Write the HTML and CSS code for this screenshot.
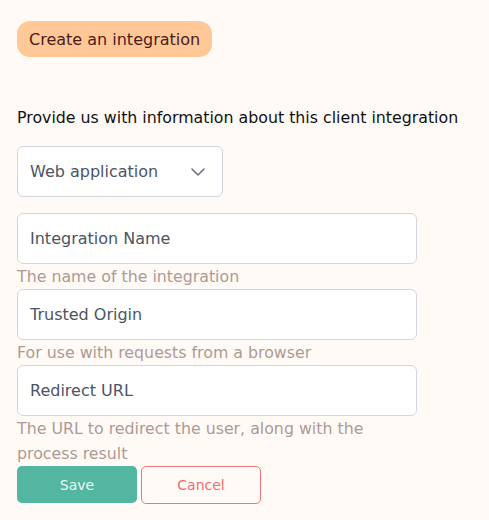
FILE: index.html
```html
<!DOCTYPE html>
<html>
<head>
<meta charset="utf-8">
<link rel="stylesheet" href="styles.css">
</head>
<body>
<div class="page">
  <div class="pill">Create an integration</div>
  <p class="intro">Provide us with information about this client integration</p>
  <div class="select">
    <span>Web application</span>
    <svg class="chev" width="14" height="8" viewBox="0 0 14 8"><path d="M1 1l6 6 6-6" fill="none" stroke="#6b7280" stroke-width="1.6" stroke-linecap="round" stroke-linejoin="round"/></svg>
  </div>
  <div class="field">
    <div class="input">Integration Name</div>
    <div class="help">The name of the integration</div>
  </div>
  <div class="field">
    <div class="input">Trusted Origin</div>
    <div class="help">For use with requests from a browser</div>
  </div>
  <div class="field">
    <div class="input">Redirect URL</div>
    <div class="help">The URL to redirect the user, along with the process result</div>
  </div>
  <div class="actions">
    <button class="btn save">Save</button>
    <button class="btn cancel">Cancel</button>
  </div>
</div>
</body>
</html>
```
FILE: styles.css
```css
html, body {
  margin: 0;
  background: #fffaf6;
}
body {
  font-family: "DejaVu Sans", "Open Sans", sans-serif;
}
.page {
  padding: 21px 17px;
  display: flex;
  flex-direction: column;
  align-items: flex-start;
}
.pill {
  height: 36px;
  display: flex;
  align-items: center;
  padding: 0 12px;
  background: #ffc896;
  color: #4a1c1c;
  border-radius: 13px;
  font-size: 16px;
}
.intro {
  margin: 49px 0 16px;
  font-size: 15.8px;
  line-height: 24px;
  color: #111;
}
.select {
  box-sizing: border-box;
  width: 206px;
  height: 51px;
  border: 1px solid #d4d6de;
  border-radius: 6px;
  background: #fff;
  display: flex;
  align-items: center;
  justify-content: space-between;
  padding: 0 17px 0 12px;
  font-size: 16px;
  color: #4b5563;
  margin-bottom: 16px;
}
.field {
  display: flex;
  flex-direction: column;
}
.input {
  box-sizing: border-box;
  width: 400px;
  height: 51px;
  border: 1px solid #d4d6de;
  border-radius: 6px;
  background: #fff;
  display: flex;
  align-items: center;
  padding: 0 12px;
  font-size: 16px;
  color: #4b5563;
}
.help {
  max-width: 372px;
  font-size: 15.8px;
  line-height: 25px;
  color: #ad9a93;
}
.actions {
  display: flex;
  gap: 4px;
  align-items: flex-start;
}
.btn {
  width: 120px;
  font-family: inherit;
  font-size: 14px;
  border-radius: 5px;
  cursor: pointer;
}
.save {
  height: 37px;
  background: #52b6a1;
  color: #eef7f2;
  border: none;
}
.cancel {
  height: 38px;
  background: transparent;
  color: #f26d6d;
  border: 1px solid #f47777;
}
```
